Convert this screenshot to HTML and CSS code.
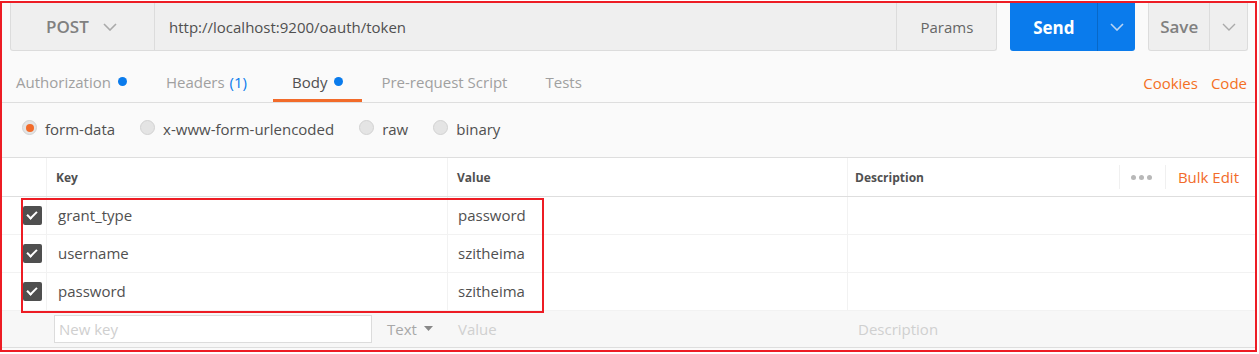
FILE: index.html
```html
<!DOCTYPE html>
<html lang="en">
<head>
    <meta charset="UTF-8">
    <title>POST oauth/token</title>
    <link rel="stylesheet" href="styles.css">
</head>
<body>
    <div class="frame">
        <!-- request bar -->
        <div class="request-bar">
            <div class="url-group">
                <div class="method">POST
                    <svg class="chev" width="14" height="8" viewBox="0 0 14 8"><path d="M1 1l6 6 6-6" fill="none" stroke="#aaa" stroke-width="1.6"/></svg>
                </div>
                <div class="url">http://localhost:9200/oauth/token</div>
                <div class="params">Params</div>
            </div>
            <div class="btn send">
                <span class="btn-main">Send</span>
                <span class="btn-arrow"><svg width="14" height="8" viewBox="0 0 14 8"><path d="M1 1l6 6 6-6" fill="none" stroke="#b9d4f3" stroke-width="1.6"/></svg></span>
            </div>
            <div class="btn save">
                <span class="btn-main">Save</span>
                <span class="btn-arrow"><svg width="14" height="8" viewBox="0 0 14 8"><path d="M1 1l6 6 6-6" fill="none" stroke="#aaa" stroke-width="1.4"/></svg></span>
            </div>
        </div>

        <!-- tabs -->
        <div class="tabs">
            <div class="tab first">Authorization <span class="dot"></span></div>
            <div class="tab headers">Headers <span class="count">(1)</span></div>
            <div class="tab active">Body <span class="dot"></span></div>
            <div class="tab">Pre-request Script</div>
            <div class="tab">Tests</div>
            <div class="tab-links">
                <span>Cookies</span>
                <span>Code</span>
            </div>
        </div>

        <!-- body types -->
        <div class="body-types">
            <label class="radio"><span class="circle checked"></span>form-data</label>
            <label class="radio"><span class="circle"></span>x-www-form-urlencoded</label>
            <label class="radio"><span class="circle"></span>raw</label>
            <label class="radio"><span class="circle"></span>binary</label>
        </div>

        <!-- key / value table -->
        <div class="kv-table">
            <div class="kv-row head">
                <div class="cell check"></div>
                <div class="cell key">Key</div>
                <div class="cell value">Value</div>
                <div class="cell desc">
                    <span>Description</span>
                    <span class="head-tools">
                        <span class="more"><i></i><i></i><i></i></span>
                        <span class="bulk">Bulk Edit</span>
                    </span>
                </div>
            </div>
            <div class="kv-row">
                <div class="cell check"><span class="box"></span></div>
                <div class="cell key">grant_type</div>
                <div class="cell value">password</div>
                <div class="cell desc"></div>
            </div>
            <div class="kv-row">
                <div class="cell check"><span class="box"></span></div>
                <div class="cell key">username</div>
                <div class="cell value">szitheima</div>
                <div class="cell desc"></div>
            </div>
            <div class="kv-row">
                <div class="cell check"><span class="box"></span></div>
                <div class="cell key">password</div>
                <div class="cell value">szitheima</div>
                <div class="cell desc"></div>
            </div>
            <div class="kv-row new">
                <div class="cell check"></div>
                <div class="cell key">
                    <div class="new-key">New key</div>
                    <div class="type">Text <svg width="9" height="5" viewBox="0 0 9 5"><path d="M0 0h9L4.5 5z" fill="#888"/></svg></div>
                </div>
                <div class="cell value placeholder">Value</div>
                <div class="cell desc placeholder">Description</div>
            </div>
        </div>

        <div class="highlight"></div>
    </div>
</body>
</html>
```

FILE: styles.css
```css
body {
    margin: 0;
    background-color: #fff;
    font-family: "Open Sans", "Liberation Sans", sans-serif;
    color: #505050;
}

.frame {
    position: relative;
    box-sizing: border-box;
    width: 1257px;
    height: 351px;
    margin-top: 1px;
    border: 2px solid #ed1c24;
    background-color: #fafafa;
}

/* request bar */
.request-bar {
    display: flex;
    height: 48px;
    padding: 0 7px 0 8px;
}

.url-group {
    display: flex;
    width: 987px;
    border: 1px solid #dcdcdc;
    border-top: none;
    border-radius: 0 0 3px 3px;
    background-color: #efefef;
}

.method {
    display: flex;
    align-items: center;
    gap: 14px;
    width: 144px;
    padding-left: 35px;
    box-sizing: border-box;
    font-size: 17px;
    font-weight: 600;
    color: #808080;
    border-right: 1px solid #dcdcdc;
}

.url {
    flex: 1;
    display: flex;
    align-items: center;
    padding-left: 14px;
    font-size: 15px;
    color: #505050;
    border-right: 1px solid #dcdcdc;
}

.params {
    width: 99px;
    display: flex;
    align-items: center;
    justify-content: center;
    font-size: 15px;
    color: #666;
}

.btn {
    display: flex;
    margin-left: 13px;
    border-radius: 0 0 3px 3px;
}

.btn-main {
    display: flex;
    align-items: center;
    justify-content: center;
    font-size: 17px;
    font-weight: 700;
}

.btn-arrow {
    display: flex;
    align-items: center;
    justify-content: center;
}

.send {
    width: 125px;
    background-color: #0a7bec;
    color: #fff;
}

.send .btn-main {
    width: 87px;
    border-right: 1px solid #0868c8;
}

.send .btn-arrow {
    flex: 1;
}

.save {
    width: 100px;
    box-sizing: border-box;
    background-color: #efefef;
    border: 1px solid #dcdcdc;
    border-top: none;
    color: #808080;
}

.save .btn-main {
    width: 60px;
    font-weight: 600;
    border-right: 1px solid #dcdcdc;
}

.save .btn-arrow {
    flex: 1;
}

/* tabs */
.tabs {
    display: flex;
    height: 51px;
    border-bottom: 1px solid #dedede;
    font-size: 15px;
    color: #a0a0a0;
}

.tab {
    display: flex;
    align-items: center;
    gap: 7px;
    padding: 13px 19px 0;
    border-bottom: 3px solid transparent;
}

.tab.first {
    padding-left: 14px;
}

.tab.headers {
    padding: 13px 26px 0 20px;
}

.tab.active {
    color: #505050;
    border-bottom-color: #f26b2a;
}

.dot {
    width: 9px;
    height: 9px;
    border-radius: 50%;
    background-color: #0a7bec;
}

.count {
    color: #0a7bec;
    margin-left: -2px;
}

.tab-links {
    margin-left: auto;
    display: flex;
    align-items: center;
    gap: 13px;
    padding: 12px 8px 0 0;
    font-size: 15px;
    color: #f47023;
}

/* body types */
.body-types {
    display: flex;
    align-items: center;
    height: 54px;
    box-sizing: border-box;
    padding: 0 0 3px 20px;
    font-size: 15px;
    color: #505050;
}

.radio {
    display: flex;
    align-items: center;
    margin-right: 25px;
}

.circle {
    width: 15px;
    height: 15px;
    box-sizing: border-box;
    border-radius: 50%;
    border: 1px solid #d2d2d2;
    background-color: #e4e4e4;
    margin: -2px 8px 0 0;
    display: flex;
    align-items: center;
    justify-content: center;
}

.circle.checked::after {
    content: "";
    width: 8px;
    height: 8px;
    border-radius: 50%;
    background-color: #f26b2a;
}

/* table */
.kv-table {
    border-top: 1px solid #dedede;
    background-color: #fff;
}

.kv-row {
    display: flex;
    height: 37px;
    border-bottom: 1px solid #f2f2f2;
}

.kv-row.head {
    height: 38px;
    border-bottom: 1px solid #dedede;
    font-weight: 700;
}

.cell {
    display: flex;
    align-items: center;
    box-sizing: border-box;
    font-size: 15px;
    padding-bottom: 1px;
}

.head .cell {
    font-size: 12px;
    padding-bottom: 0;
}

.cell.check {
    width: 45px;
    padding-left: 21px;
    border-right: 1px solid #f2f2f2;
}

.cell.key {
    width: 401px;
    padding-left: 11px;
    border-right: 1px solid #f2f2f2;
}

.cell.value {
    width: 400px;
    padding-left: 10px;
    border-right: 1px solid #f2f2f2;
}

.cell.desc {
    flex: 1;
    padding-left: 7px;
}

.head .cell.key,
.head .cell.value {
    padding-left: 9px;
}

.head-tools {
    margin-left: auto;
    display: flex;
    align-items: center;
    height: 24px;
    font-weight: 400;
}

.more {
    display: flex;
    align-items: center;
    gap: 3px;
    height: 24px;
    padding: 0 13px 0 11px;
    border-left: 1px solid #f0f0f0;
    border-right: 1px solid #f0f0f0;
}

.more i {
    width: 5px;
    height: 5px;
    border-radius: 50%;
    background-color: #b8b8b8;
}

.bulk {
    padding: 0 16px 0 12px;
    font-size: 15px;
    color: #f26b2a;
}

.box {
    width: 19px;
    height: 19px;
    border-radius: 2px;
    background-color: #4f4f4f;
    position: relative;
}

.box::after {
    content: "";
    position: absolute;
    left: 6px;
    top: 3px;
    width: 4px;
    height: 8px;
    border: solid #fff;
    border-width: 0 2px 2px 0;
    transform: rotate(45deg);
}

.kv-row.new {
    height: 36px;
    background-color: #f7f7f7;
    border-bottom: 1px solid #dedede;
}

.kv-row.new .cell {
    border-right: none;
}

.kv-row.new .cell.key {
    padding-left: 7px;
}

.new-key {
    width: 318px;
    height: 28px;
    box-sizing: border-box;
    border: 1px solid #dcdcdc;
    background-color: #fff;
    padding-left: 4px;
    display: flex;
    align-items: center;
    color: #cfcfcf;
}

.type {
    display: flex;
    align-items: center;
    gap: 7px;
    margin-left: 15px;
    color: #a8a8a8;
}

.placeholder {
    color: #d0d0d0;
}

.kv-row.new .cell.desc {
    padding-left: 10px;
}

/* annotation box */
.highlight {
    position: absolute;
    left: 19px;
    top: 195px;
    width: 523px;
    height: 115px;
    box-sizing: border-box;
    border: 2px solid #ed1c24;
}
```
